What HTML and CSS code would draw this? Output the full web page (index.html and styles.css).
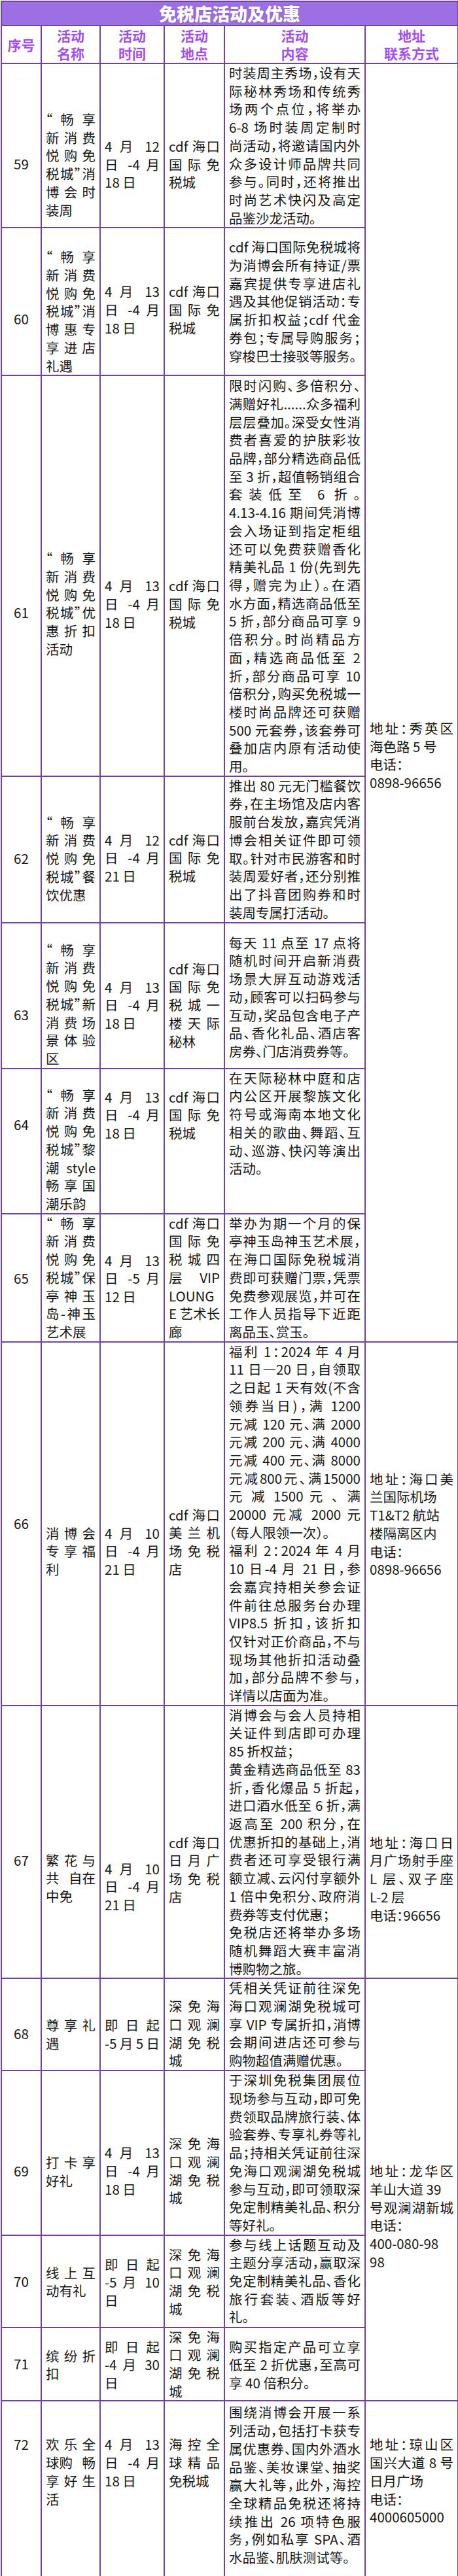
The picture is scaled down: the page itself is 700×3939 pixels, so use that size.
FILE: index.html
```html
<!DOCTYPE html>
<html lang="zh-CN">
<head>
<meta charset="utf-8">
<title>免税店活动及优惠</title>
<link rel="stylesheet" href="styles.css">
</head>
<body>
<table class="tbl">
<colgroup><col class="w1"><col class="w2"><col class="w3"><col class="w4"><col class="w5"><col class="w6"></colgroup>
<tr class="ttl"><th colspan="6">免税店活动及优惠</th></tr>
<tr class="hd"><th>序号</th><th>活动<br>名称</th><th>活动<br>时间</th><th>活动<br>地点</th><th>活动<br>内容</th><th>地址<br>联系方式</th></tr>

<tr class="r59">
<td class="no">59</td>
<td class="nm"><p>“畅享</p><p>新消费</p><p>悦购免</p><p>税城”消</p><p>博会时</p><p class="e">装周</p></td>
<td class="tm"><p>4 月 12</p><p>日 -4 月</p><p class="e">18 日</p></td>
<td class="pl"><p>cdf 海口</p><p>国际免</p><p class="e">税城</p></td>
<td class="ct"><p>时装周主秀场，设有天</p><p>际秘林秀场和传统秀</p><p>场两个点位，将举办</p><p>6-8 场时装周定制时</p><p>尚活动，将邀请国内外</p><p>众多设计师品牌共同</p><p>参与。同时，还将推出</p><p>时尚艺术快闪及高定</p><p class="e">品鉴沙龙活动。</p></td>
<td class="ad a1" rowspan="7"><p>地址：秀英区</p><p class="e">海色路 5 号</p><p class="e">电话：</p><p class="e">0898-96656</p></td>
</tr>

<tr class="r60">
<td class="no">60</td>
<td class="nm"><p>“畅享</p><p>新消费</p><p>悦购免</p><p>税城”消</p><p>博惠专</p><p>享进店</p><p class="e">礼遇</p></td>
<td class="tm"><p>4 月 13</p><p>日 -4 月</p><p class="e">18 日</p></td>
<td class="pl"><p>cdf 海口</p><p>国际免</p><p class="e">税城</p></td>
<td class="ct"><p>cdf 海口国际免税城将</p><p>为消博会所有持证/票</p><p>嘉宾提供专享进店礼</p><p>遇及其他促销活动：专</p><p>属折扣权益；cdf 代金</p><p>券包；专属导购服务；</p><p class="e">穿梭巴士接驳等服务。</p></td>
</tr>

<tr class="r61">
<td class="no">61</td>
<td class="nm"><p>“畅享</p><p>新消费</p><p>悦购免</p><p>税城”优</p><p>惠折扣</p><p class="e">活动</p></td>
<td class="tm"><p>4 月 13</p><p>日 -4 月</p><p class="e">18 日</p></td>
<td class="pl"><p>cdf 海口</p><p>国际免</p><p class="e">税城</p></td>
<td class="ct"><p>限时闪购、多倍积分、</p><p>满赠好礼......众多福利</p><p>层层叠加。深受女性消</p><p>费者喜爱的护肤彩妆</p><p>品牌，部分精选商品低</p><p>至 3 折，超值畅销组合</p><p>套装低至 6 折。</p><p>4.13-4.16 期间凭消博</p><p>会入场证到指定柜组</p><p>还可以免费获赠香化</p><p>精美礼品 1 份(先到先</p><p>得，赠完为止）。在酒</p><p>水方面，精选商品低至</p><p>5 折，部分商品可享 9</p><p>倍积分。时尚精品方</p><p>面，精选商品低至 2</p><p>折，部分商品可享 10</p><p>倍积分，购买免税城一</p><p>楼时尚品牌还可获赠</p><p>500 元套券，该套券可</p><p>叠加店内原有活动使</p><p class="e">用。</p></td>
</tr>

<tr class="r62">
<td class="no">62</td>
<td class="nm"><p>“畅享</p><p>新消费</p><p>悦购免</p><p>税城”餐</p><p class="e">饮优惠</p></td>
<td class="tm"><p>4 月 12</p><p>日 -4 月</p><p class="e">21 日</p></td>
<td class="pl"><p>cdf 海口</p><p>国际免</p><p class="e">税城</p></td>
<td class="ct"><p>推出 80 元无门槛餐饮</p><p>券，在主场馆及店内客</p><p>服前台发放，嘉宾凭消</p><p>博会相关证件即可领</p><p>取。针对市民游客和时</p><p>装周爱好者，还分别推</p><p>出了抖音团购券和时</p><p class="e">装周专属打活动。</p></td>
</tr>

<tr class="r63">
<td class="no">63</td>
<td class="nm"><p>“畅享</p><p>新消费</p><p>悦购免</p><p>税城”新</p><p>消费场</p><p>景体验</p><p class="e">区</p></td>
<td class="tm"><p>4 月 13</p><p>日 -4 月</p><p class="e">18 日</p></td>
<td class="pl"><p>cdf 海口</p><p>国际免</p><p>税城一</p><p>楼天际</p><p class="e">秘林</p></td>
<td class="ct"><p>每天 11 点至 17 点将</p><p>随机时间开启新消费</p><p>场景大屏互动游戏活</p><p>动，顾客可以扫码参与</p><p>互动，奖品包含电子产</p><p>品、香化礼品、酒店客</p><p class="e">房券、门店消费券等。</p></td>
</tr>

<tr class="r64">
<td class="no">64</td>
<td class="nm"><p>“畅享</p><p>新消费</p><p>悦购免</p><p>税城”黎</p><p>潮 style</p><p>畅享国</p><p class="e">潮乐韵</p></td>
<td class="tm"><p>4 月 13</p><p>日 -4 月</p><p class="e">18 日</p></td>
<td class="pl"><p>cdf 海口</p><p>国际免</p><p class="e">税城</p></td>
<td class="ct"><p>在天际秘林中庭和店</p><p>内公区开展黎族文化</p><p>符号或海南本地文化</p><p>相关的歌曲、舞蹈、互</p><p>动、巡游、快闪等演出</p><p class="e">活动。</p></td>
</tr>

<tr class="r65">
<td class="no">65</td>
<td class="nm"><p>“畅享</p><p>新消费</p><p>悦购免</p><p>税城”保</p><p>亭神玉</p><p>岛-神玉</p><p class="e">艺术展</p></td>
<td class="tm"><p>4 月 13</p><p>日 -5 月</p><p class="e">12 日</p></td>
<td class="pl"><p>cdf 海口</p><p>国际免</p><p>税城四</p><p>层 VIP</p><p>LOUNG</p><p>E 艺术长</p><p class="e">廊</p></td>
<td class="ct"><p>举办为期一个月的保</p><p>亭神玉岛神玉艺术展，</p><p>在海口国际免税城消</p><p>费即可获赠门票，凭票</p><p>免费参观展览，并可在</p><p>工作人员指导下近距</p><p class="e">离品玉、赏玉。</p></td>
</tr>

<tr class="r66">
<td class="no">66</td>
<td class="nm"><p>消博会</p><p>专享福</p><p class="e">利</p></td>
<td class="tm"><p>4 月 10</p><p>日 -4 月</p><p class="e">21 日</p></td>
<td class="pl"><p>cdf 海口</p><p>美兰机</p><p>场免税</p><p class="e">店</p></td>
<td class="ct"><p>福利 1：2024 年 4 月</p><p>11 日—20 日，自领取</p><p>之日起 1 天有效(不含</p><p>领券当日)，满 1200</p><p>元减 120 元、满 2000</p><p>元减 200 元、满 4000</p><p>元减 400 元、满 8000</p><p>元减800元、满15000</p><p>元 减 1500 元 、 满</p><p>20000 元减 2000 元</p><p class="e">（每人限领一次）。</p><p>福利 2：2024 年 4 月</p><p>10 日-4 月 21 日，参</p><p>会嘉宾持相关参会证</p><p>件前往总服务台办理</p><p>VIP8.5 折扣，该折扣</p><p>仅针对正价商品，不与</p><p>现场其他折扣活动叠</p><p>加，部分品牌不参与，</p><p class="e">详情以店面为准。</p></td>
<td class="ad"><p>地址：海口美</p><p class="e">兰国际机场</p><p class="e">T1&amp;T2 航站</p><p class="e">楼隔离区内</p><p class="e">电话：</p><p class="e">0898-96656</p></td>
</tr>

<tr class="r67">
<td class="no">67</td>
<td class="nm"><p>繁花与</p><p class="sb"><span>共</span><span>自在</span></p><p class="e">中免</p></td>
<td class="tm"><p>4 月 10</p><p>日 -4 月</p><p class="e">21 日</p></td>
<td class="pl"><p>cdf 海口</p><p>日月广</p><p>场免税</p><p class="e">店</p></td>
<td class="ct"><p>消博会与会人员持相</p><p>关证件到店即可办理</p><p class="e">85 折权益；</p><p>黄金精选商品低至 83</p><p>折，香化爆品 5 折起，</p><p>进口酒水低至 6 折，满</p><p>返高至 200 积分，在</p><p>优惠折扣的基础上，消</p><p>费者还可享受银行满</p><p>额立减、云闪付享额外</p><p>1 倍中免积分、政府消</p><p class="e">费券等支付优惠；</p><p>免税店还将举办多场</p><p>随机舞蹈大赛丰富消</p><p class="e">博购物之旅。</p></td>
<td class="ad"><p>地址：海口日</p><p>月广场射手座</p><p>L 层、双子座</p><p class="e">L-2 层</p><p class="e">电话：96656</p></td>
</tr>

<tr class="r68">
<td class="no">68</td>
<td class="nm"><p>尊享礼</p><p class="e">遇</p></td>
<td class="tm"><p>即日起</p><p>-5月5日</p></td>
<td class="pl"><p>深免海</p><p>口观澜</p><p>湖免税</p><p class="e">城</p></td>
<td class="ct"><p>凭相关凭证前往深免</p><p>海口观澜湖免税城可</p><p>享 VIP 专属折扣，消博</p><p>会期间进店还可参与</p><p class="e">购物超值满赠优惠。</p></td>
<td class="ad a4" rowspan="4"><p>地址：龙华区</p><p class="e">羊山大道 39</p><p>号观澜湖新城</p><p class="e">电话：</p><p class="e">400-080-98</p><p class="e">98</p></td>
</tr>

<tr class="r69">
<td class="no">69</td>
<td class="nm"><p>打卡享</p><p class="e">好礼</p></td>
<td class="tm"><p>4 月 13</p><p>日 -4 月</p><p class="e">18 日</p></td>
<td class="pl"><p>深免海</p><p>口观澜</p><p>湖免税</p><p class="e">城</p></td>
<td class="ct"><p>于深圳免税集团展位</p><p>现场参与互动，即可免</p><p>费领取品牌旅行装、体</p><p>验套券、专享礼券等礼</p><p>品；持相关凭证前往深</p><p>免海口观澜湖免税城</p><p>参与互动，即可领取深</p><p>免定制精美礼品、积分</p><p class="e">等好礼。</p></td>
</tr>

<tr class="r70">
<td class="no">70</td>
<td class="nm"><p>线上互</p><p class="e">动有礼</p></td>
<td class="tm"><p>即日起</p><p>-5 月 10</p><p class="e">日</p></td>
<td class="pl"><p>深免海</p><p>口观澜</p><p>湖免税</p><p class="e">城</p></td>
<td class="ct"><p>参与线上话题互动及</p><p>主题分享活动，赢取深</p><p>免定制精美礼品、香化</p><p>旅行套装、酒版等好</p><p class="e">礼。</p></td>
</tr>

<tr class="r71">
<td class="no">71</td>
<td class="nm"><p>缤纷折</p><p class="e">扣</p></td>
<td class="tm"><p>即日起</p><p>-4 月 30</p><p class="e">日</p></td>
<td class="pl"><p>深免海</p><p>口观澜</p><p>湖免税</p><p class="e">城</p></td>
<td class="ct"><p>购买指定产品可立享</p><p>低至 2 折优惠，至高可</p><p class="e">享 40 倍积分。</p></td>
</tr>

<tr class="r72">
<td class="no">72</td>
<td class="nm"><p>欢乐全</p><p class="sb"><span>球购</span><span>畅</span></p><p>享好生</p><p class="e">活</p></td>
<td class="tm"><p>4 月 13</p><p>日 -4 月</p><p class="e">18 日</p></td>
<td class="pl"><p>海控全</p><p>球精品</p><p class="e">免税城</p></td>
<td class="ct"><p>围绕消博会开展一系</p><p>列活动，包括打卡获专</p><p>属优惠券、国内外酒水</p><p>品鉴、美妆课堂、抽奖</p><p>赢大礼等，此外，海控</p><p>全球精品免税还将持</p><p>续推出 26 项特色服</p><p>务，例如私享 SPA、酒</p><p class="e">水品鉴、肌肤测试等。</p></td>
<td class="ad"><p>地址：琼山区</p><p>国兴大道 8 号</p><p class="e">日月广场</p><p class="e">电话：</p><p class="e">4000605000</p></td>
</tr>
</table>
</body>
</html>
```

FILE: styles.css
```css
html, body {
  margin: 0;
  padding: 0;
  background: #ffffff;
}

body {
  width: 700px;
  overflow: hidden;
  font-family: "Noto Sans CJK SC", "Noto Sans", sans-serif;
  color: #161616;
}

.tbl {
  margin: 1px 0 0 1px;
  width: 698px;
  border-collapse: collapse;
  table-layout: fixed;
  font-size: 20.5px;
  line-height: 27.7px;
  font-feature-settings: "halt" 1;
}

.w1 { width: 61px; }
.w2 { width: 90px; }
.w3 { width: 98px; }
.w4 { width: 92px; }
.w5 { width: 215px; }
.w6 { width: 142px; }

.tbl td,
.tbl th {
  border: 2px solid #6e43a3;
  padding: 0 6px;
  vertical-align: top;
}

.ttl { height: 37px; }
.ttl th {
  background: #9d6fe4;
  color: #ffffff;
  font-size: 27px;
  font-weight: 900;
  line-height: 34px;
  text-align: center;
  vertical-align: middle;
  padding: 0;
  text-shadow: 0 0 2px #7a4bc4;
}

.hd { height: 58px; }
.hd th {
  color: #a14ff0;
  font-weight: 700;
  font-size: 21px;
  line-height: 27px;
  text-align: center;
  vertical-align: middle;
  padding: 0;
}

.tbl p {
  margin: 0;
  white-space: nowrap;
  text-align: justify;
  text-align-last: justify;
}

.tbl p.e {
  text-align-last: left;
}

.tbl p.sb {
  display: flex;
  justify-content: space-between;
}

.tbl .no {
  text-align: center;
  padding: 0;
}

/* row 59 */
.r59 { height: 251px; }
.r59 .no { padding-top: 139px; }
.r59 .nm { padding-top: 71px; }
.r59 .tm, .r59 .pl { padding-top: 112px; }
.r59 .ct { padding-top: 0; }
.tbl .a1 { padding-top: 1002px; }

/* row 60 */
.r60 { height: 223px; }
.r60 .no { padding-top: 125px; }
.r60 .nm { padding-top: 30px; }
.r60 .tm, .r60 .pl { padding-top: 83px; }
.r60 .ct { padding-top: 15px; }

/* row 61 */
.r61 { height: 612px; }
.r61 .no { padding-top: 348px; }
.r61 .nm { padding-top: 265px; }
.r61 .tm, .r61 .pl { padding-top: 307px; }
.r61 .ct { padding-top: 1px; }

/* row 62 */
.r62 { height: 224px; }
.r62 .no { padding-top: 111px; }
.r62 .nm { padding-top: 56px; }
.r62 .tm, .r62 .pl { padding-top: 83px; }
.r62 .ct { padding-top: 0; }

/* row 63 */
.r63 { height: 223px; }
.r63 .no { padding-top: 126px; }
.r63 .nm { padding-top: 27px; }
.r63 .tm { padding-top: 84px; }
.r63 .pl { padding-top: 56px; }
.r63 .ct { padding-top: 16px; }

/* row 64 */
.r64 { height: 222px; }
.r64 .no { padding-top: 71px; }
.r64 .nm { padding-top: 26px; }
.r64 .tm, .r64 .pl { padding-top: 29px; }
.r64 .ct { padding-top: 0; }

/* row 65 */
.r65 { height: 196px; }
.r65 .no { padding-top: 84px; }
.r65 .nm, .r65 .pl, .r65 .ct { padding-top: 0; }
.r65 .tm { padding-top: 57px; }

/* row 66 */
.r66 { height: 556px; }
.r66 .no { padding-top: 263px; }
.r66 .nm, .r66 .tm { padding-top: 278px; }
.r66 .pl { padding-top: 250px; }
.r66 .ct { padding-top: 0; }
.r66 .ad { padding-top: 195px; }

/* row 67 */
.r67 { height: 417px; }
.r67 .no, .r67 .nm { padding-top: 222px; }
.r67 .tm { padding-top: 235px; }
.r67 .pl, .r67 .ad { padding-top: 195px; }
.r67 .ct { padding-top: 0; }

/* row 68 */
.r68 { height: 141px; }
.r68 .no { padding-top: 70px; }
.r68 .nm, .r68 .tm { padding-top: 57px; }
.r68 .pl { padding-top: 28px; }
.r68 .ct { padding-top: 0; }
.tbl .a4 { padding-top: 280px; }

/* row 69 */
.r69 { height: 251px; }
.r69 .no { padding-top: 139px; }
.r69 .nm { padding-top: 126px; }
.r69 .tm { padding-top: 111px; }
.r69 .pl { padding-top: 97px; }
.r69 .ct { padding-top: 0; }

/* row 70 */
.r70 { height: 141px; }
.r70 .no { padding-top: 56px; }
.r70 .nm { padding-top: 43px; }
.r70 .tm { padding-top: 30px; }
.r70 .pl { padding-top: 15px; }
.r70 .ct { padding-top: 0; }

/* row 71 */
.r71 { height: 112px; }
.r71 .no { padding-top: 41px; }
.r71 .nm { padding-top: 29px; }
.r71 .tm, .r71 .ct { padding-top: 15px; }
.r71 .pl { padding-top: 0; }

/* row 72 */
.r72 { height: 290px; }
.r72 td { padding-top: 52px; }
.r72 .no { padding-top: 52px; }
.r72 .ct { padding-top: 3px; }
```
